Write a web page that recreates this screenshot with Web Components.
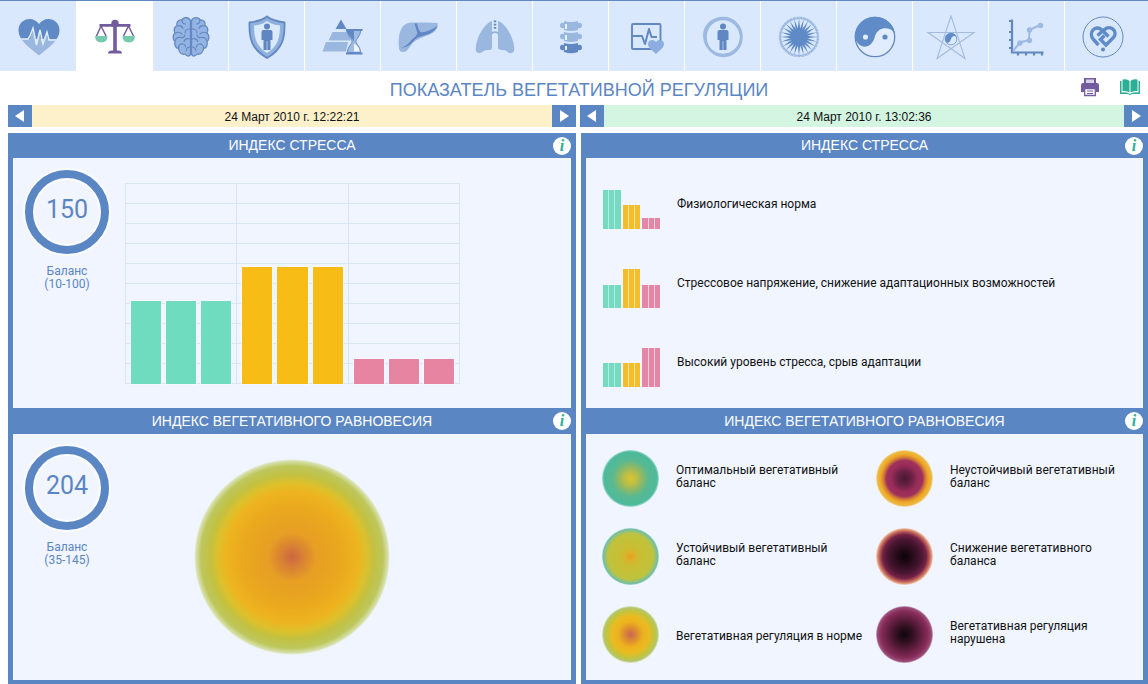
<!DOCTYPE html>
<html lang="ru">
<head>
<meta charset="utf-8">
<title>Показатель вегетативной регуляции</title>
<meta name="viewport" content="width=device-width, initial-scale=1">
<style>
html, body { margin: 0; background: #fff; }
body { font-family: "Liberation Sans", Arial, sans-serif; }
</style>
</head>
<body>
<report-page></report-page>

<script>
const define = (name, html, setup) => {
  const template = document.createElement('template');
  template.innerHTML = html;
  customElements.define(name, class extends HTMLElement {
    constructor() {
      super();
      this.attachShadow({ mode: 'open' }).append(template.content.cloneNode(true));
    }
    connectedCallback() { if (setup) setup(this, this.shadowRoot); }
  });
};

/* ---------- icon drawings, all on a 50x50 grid ---------- */
const rays = Array.from({ length: 24 }, (_, i) =>
  `<path transform="rotate(${i * 15} 25 25)" d="M23.4 20 25 6.5 26.6 20z"/>`).join('');
const man = '<circle cx="25" cy="14.5" r="3"/><path d="M21.500 18h7q2 0 2 2v8h-2v10h-3.200v-9h-.6v9h-3.200V28h-2v-8q0-2 2-2z"/>';
const ICONS = {
  heart: `<defs><clipPath id="h"><path d="M25 43.500C16 36 4.500 28.500 4.500 18.500 4.500 11 10 7 15.500 7c4 0 7.500 2 9.500 5 2-3 5.500-5 9.500-5C40 7 45.500 11 45.500 18.500 45.500 28.500 34 36 25 43.500z"/></clipPath></defs>
    <g clip-path="url(#h)"><path fill="#5f8ac6" d="M0 0h50v27H0z"/><path fill="#9ab7df" d="M4 27h12l3-9 3 14 3-12 3 11 4-9 2 5h12v18H4z"/>
    <path fill="none" stroke="#e3efff" stroke-width="1.400" d="M4 27h10l2-3 3-8 3.500 17 3.500-15 3 14 4-12 2 8h12"/></g>`,
  scales: `<g fill="none" stroke="#725c9e" stroke-width="1.500"><path d="M11 14 6.500 24M11 14l5 10M38.500 14l-5 10M38.500 14 43.500 24"/></g>
    <g fill="#725c9e"><path d="M9.500 12h31v2.700h-31zM23.200 12h3.600v27h-3.600zM18 41.500q0-3 4-3h6q4 0 4 3z"/><circle cx="25" cy="11.500" r="3.700"/></g>
    <path fill="#78c9af" d="M5 24h12.500q0 6.500-6.200 6.500T5 24zM32.500 24H45q0 6.500-6.200 6.500T32.500 24z"/>`,
  brain: `<path fill="#94b4e3" stroke="#6389c2" stroke-width="1.300" d="M24.500 8.500C23 5 17.500 4.500 16 8c-4-.5-6 3-5 5.500-3 1.500-3.500 5-2 7.500-2.500 2.500-2.500 6.500 0 8.500-1 4 1 6.500 3.500 7 .5 4 3 6.500 6.500 5.500 2 3 5 2.500 5.500 0zM25.500 8.500C27 5 32.500 4.500 34 8c4-.5 6 3 5 5.500 3 1.500 3.500 5 2 7.500 2.500 2.500 2.500 6.500 0 8.500 1 4-1 6.500-3.500 7-.5 4-3 6.500-6.500 5.500-2 3-5 2.500-5.500 0z"/>
    <path fill="none" stroke="#6389c2" stroke-width="1.100" stroke-linecap="round" d="M16 8c0 3 1 4 3.500 4M11 14c3-1 5 0 6 2.500M9 21c3-1.500 5-1 7 1M24 17c-3 0-5 1-5 4M9 29c1-3 3-4 6-3.500 2 .5 3.500-.5 4-2.500M24 27c-3-1-5 0-6 2.500M12.500 36c0-3 2-4.500 4.500-4 2 0 2.500 1.500 2.500 3M24 35c-2 0-3.500 1-4 4M34 8c0 3-1 4-3.500 4M39 14c-3-1-5 0-6 2.500M41 21c-3-1.500-5-1-7 1M26 17c3 0 5 1 5 4M41 29c-1-3-3-4-6-3.500-2 .5-3.500-.5-4-2.500M26 27c3-1 5 0 6 2.500M37.500 36c0-3-2-4.500-4.500-4-2 0-2.500 1.500-2.500 3M26 35c2 0 3.500 1 4 4"/>`,
  shield: `<path fill="#90b1de" stroke="#6288c1" stroke-width="1.800" d="M25 4.500c5 4 10 5 17.500 6C43 25 41 37 25 46 9 37 7 25 7.500 10.500 15 9.500 20 8.500 25 4.500z"/>
    <path fill="#dceafd" d="M25 9c4 3 8 4 13 4.500C38 25 36 34.500 25 41 14 34.500 12 25 12 13.500 17 13 21 12 25 9z"/><g fill="#6086c1">${man}</g>`,
  pyramid: `<path fill="#6288c1" d="m23 7.500 5.500 9.500h-11z"/><path fill="#9ab7df" d="M14.500 20H29l4 8.500H10.500zM8 30h22l-2 9.500H4.500z"/>
    <path fill="#9fbce4" stroke="#6288c1" d="M29.500 18.500h13c0 6-4.500 8-4.500 11s4.500 5 4.500 11h-13c0-6 4.500-8 4.500-11s-4.500-5-4.500-11z"/><path fill="#eef5ff" d="M30.500 20H36v8h-1c-1-3-4-4-4.500-8zM36 31.500c3 2 5.500 4 5.500 8H36z"/>
    <path fill="#6288c1" d="M28 17h16.500v2H28zM28 40.500h16.500v2H28zM27.500 18.500H36v11z"/>`,
  liver: `<path fill="#9ab7df" d="M5 35C4 26 5 10.500 18 10.500c8 0 19-.5 25.500.500 1 6-2.500 9-8 11.500-9 4-14.500 5-18 10-3 4-5 8-9 7.500C6 39.500 5 38 5 35z"/>
    <path fill="#6087c4" d="M20.500 11.500h2.500q1 6 4 9 9-1 17-7-4 8-14 10-6 1-9 4-6 8-14 8.500 6-2 11-8.500 4-3 5.500-6z"/>`,
  lungs: `<path fill="#9ab7df" d="M22 9c-5 1-13 11-15.500 22-1 5-1.500 9 1.500 10 4 1 5-3 9-3 3 0 5 0 5-3zM28 9c5 1 13 11 15.500 22 1 5 1.500 9-1.500 10-4 1-5-3-9-3-3 0-5 0-5-3z"/><path fill="none" stroke="#6288c1" stroke-width="2.500" stroke-dasharray="1.800 1.400" d="M25 8.500V18"/><path fill="none" stroke="#8cacda" stroke-width="1.300" d="M21 22q4-4 8 0"/>`,
  spine: `<g fill="#9ab7df"><path d="M18 9q7 2 14 0v2q4-1 4 2.500T32 16v2q-7 2-14 0v-2q-4 1-4-2.500T18 11z"/><path d="M18 20q7 2 14 0v2q4-1 4 2.500T32 27v2q-7 2-14 0v-2q-4 1-4-2.500T18 22z"/></g><path fill="#6087c4" d="M18 31q7 2 14 0v2q4-1 4 2.500T32 38v2q-7 2.500-14 0v-2q-4 1-4-2.500T18 33z"/><path fill="#e7f1ff" d="M19 12h2v5h-2zM19 23h2v5h-2zM19 34h2v4h-2z"/>`,
  monitor: `<rect x="10" y="12" width="28.5" height="25" rx="1" fill="none" stroke="#6288c1" stroke-width="1.900"/><path fill="none" stroke="#6288c1" stroke-width="2" stroke-linejoin="round" d="M10 24h10l3 8 4-15 2.500 8H35"/>
    <path fill="#8bade0" d="M34 42c-4-4-8-6.500-8-10 0-4.500 6-5.500 8-2 2-3.500 8-2.500 8 2 0 3.500-4 6-8 10z"/>`,
  aura: `<g fill="none" stroke="#9cb9e1"><ellipse cx="25.500" cy="25" rx="18" ry="19" stroke-width="2.500"/><ellipse cx="24.500" cy="25" rx="19" ry="18" stroke-width="2" transform="rotate(40 25 25)"/><circle cx="25" cy="25" r="17.500" stroke-width="1.500"/></g><g fill="#6087c4">${man}</g>`,
  mandala: `<circle cx="25" cy="25" r="19" fill="none" stroke="#9cb9e1" stroke-width="2.400"/><circle cx="25" cy="25" r="19.500" fill="none" stroke="#c9dcf6" stroke-width="1" stroke-dasharray="1.500 2"/><g fill="#5f8ac6">${rays}<circle cx="25" cy="25" r="6"/></g>`,
  yinyang: `<circle cx="25" cy="25" r="19.700" fill="#e1edfe" stroke="#6288c1" stroke-width="1.300"/><path fill="#5f8bc9" d="M4.800 25a20.200 20.200 0 0 1 40.400 0C45 15 29 12 25 24c-3 14-17 14-20.200 1z"/><circle cx="15.500" cy="25" r="2.600" fill="#e1edfe"/><circle cx="35" cy="25" r="2.600" fill="#6288c1"/>`,
  star: `<path fill="none" stroke="#a4bcdf" stroke-width="1.100" d="M25 4 11 46.500 48 20.500H2L39 46.500z"/><circle cx="25" cy="27" r="5.800" fill="#dceafd" stroke="#6f95cc" stroke-width=".8"/><path fill="#5f8bc9" d="M19 27a6 6 0 0 1 12 0c0-4-5-4-6 0s-5 6-6 0z"/>`,
  graph: `<path fill="none" stroke="#6288c1" stroke-width="2.200" d="M10 7.500V40.500H41.500M7 9h3M7 20h3M7 28h3M7 36h3M16 40.500v3M24 40.500v3M32 40.500v3M40 40.500v3"/><path fill="none" stroke="#9fbae2" stroke-width="2" d="m11 39 7-8.500 9-2.500.5-10L38 13"/><g fill="#9fbae2"><circle cx="18" cy="31" r="2.700"/><circle cx="27.500" cy="28.500" r="2.700"/><circle cx="27.500" cy="18" r="2.700"/><circle cx="38.500" cy="13.500" r="2.700"/></g>`,
  logo: `<circle cx="25" cy="25" r="20" fill="none" stroke="#6288c1"/><g fill="none" stroke="#5f8bc9" stroke-width="3.400"><path d="m20.500 33-5-5.500c-6-7 2-15.500 8.500-9.500l6.500 6.500"/><path d="m19.500 23.500 6.500-5.500c6-6 14.500 1 9.500 7.500L28 33l-5.500-5.500 4-4"/></g><circle cx="25" cy="37.500" r="2" fill="#6288c1"/>`
};
const TABS = [
  ['heart', 'Сердце'], ['scales', 'Вегетативная регуляция'], ['brain', 'Мозг'], ['shield', 'Защита'],
  ['pyramid', 'Ресурсы'], ['liver', 'Печень'], ['lungs', 'Лёгкие'], ['spine', 'Позвоночник'],
  ['monitor', 'Монитор'], ['aura', 'Аура'], ['mandala', 'Мандала'], ['yinyang', 'Инь и ян'],
  ['star', 'Звезда'], ['graph', 'График'], ['logo', 'О программе']
];

define('nav-tab', `<style>
  :host { display: block; flex: 0 0 76px; box-sizing: border-box; border-left: 1px solid #fff; height: 70px; }
  :host([active]) { background: #fff; }
  :host(:first-child) { border-left-color: transparent; }
  button { display: grid; place-items: center; width: 100%; height: 100%; padding: 2px 0 0; border: 0; background: none; }
  svg { width: 50px; height: 50px; display: block; }
</style><button type="button"><svg viewBox="0 0 50 50"></svg></button>`, (el, root) => {
  root.querySelector('svg').innerHTML = ICONS[el.getAttribute('icon')];
  root.querySelector('button').setAttribute('aria-label', el.getAttribute('label'));
});

define('nav-bar', `<style>
  :host { display: block; background: #d9e8fd; border-top: 1px solid #6288c1; overflow: hidden; }
  nav { display: flex; }
</style><nav>${TABS.map(([i, l]) => `<nav-tab icon="${i}" label="${l}"${i === 'scales' ? ' active' : ''}></nav-tab>`).join('')}</nav>`);

define('title-bar', `<style>
  :host { display: grid; grid-template-columns: 1fr auto 1fr; align-items: center; height: 34px; padding: 0 8px 0 18px; }
  h1 { grid-column: 2; margin: 0; font-size: 18px; line-height: 22px; padding-top: 3px; font-weight: 400; color: #5b86c4; white-space: nowrap; }
  div { display: flex; justify-content: flex-end; gap: 20px; padding-bottom: 2px; }
  button { border: 0; padding: 0; background: none; width: 20px; height: 20px; }
  svg { display: block; width: 20px; height: 20px; }
</style><h1><slot></slot></h1><div>
<button type="button" aria-label="Печать"><svg viewBox="0 0 20 20"><path fill="#725c9e" d="M4 1h12v5H4zM3 6h14q2 0 2 2v7h-3v-4H4v4H1V8q0-2 2-2z"/><path fill="#d8d3e8" d="M6 2.500h8V6H6z"/><path fill="#fff" stroke="#725c9e" stroke-width="1.300" d="M4.700 11.500h10.600v7H4.700z"/><path stroke="#725c9e" d="M7 14h6M7 16.500h6"/></svg></button>
<button type="button" aria-label="Справка"><svg viewBox="0 0 20 20"><path fill="#2cae97" d="M0 4h1.500v11.500q5.500-1 8.500 1.500 3-2.500 8.500-1.500V4H20v13h-8q-1 1-2 1t-2-1H0z"/><path fill="#2cae97" d="M2.500 2.500q5-1 7 1.500v11.500q-2.500-2-7-1.500zM17.500 2.500q-5-1-7 1.500v11.500q2.500-2 7-1.500z"/></svg></button></div>`);

define('date-bar', `<style>
  :host { display: flex; align-items: stretch; height: 22px; background: var(--bar); color: #111; }
  button { flex: 0 0 24px; border: 0; padding: 0; background: #5b86c4; display: grid; place-items: center; }
  svg { display: block; width: 10px; height: 12px; fill: #fff; }
  time { flex: 1; text-align: center; font-size: 12px; line-height: 24px; }
</style><button type="button" aria-label="Предыдущее"><svg viewBox="0 0 10 12"><path d="M9 0v12L0 6z"/></svg></button><time><slot></slot></time><button type="button" aria-label="Следующее"><svg viewBox="0 0 10 12"><path d="M1 0v12l9-6z"/></svg></button>`);

define('info-panel', `<style>
  :host { display: block; background: #5b86c4; padding: 0 5px; }
  header { display: grid; grid-template-columns: 18px 1fr 18px; align-items: center; height: var(--head, 25px); color: #fff; }
  h2 { grid-column: 2; margin: 0; font-size: 14px; line-height: 25px; font-weight: 400; text-align: center; }
  button { width: 18px; height: 18px; border: 0; border-radius: 50%; padding: 0; background: #fff; color: #2cae97; font: italic bold 16px/18px "Liberation Serif", serif; }
  section { background: #f0f5ff; min-height: var(--body, 250px); box-sizing: border-box; }
</style><header><h2></h2><button type="button">i</button></header><section><slot></slot></section>`, (el, root) => {
  root.querySelector('h2').textContent = el.getAttribute('heading');
});

define('value-ring', `<style>
  :host { display: block; flex: 0 0 84px; text-align: center; color: #5b86c4; font-family: Roboto, sans-serif; }
  .ring { box-sizing: border-box; width: 84px; height: 84px; border: 8px solid #5b86c4; border-radius: 50%; box-shadow: 0 0 0 2px #fafcff, inset 0 0 0 2px #fafcff; font-size: 25px; line-height: 64px; }
  p { margin: 11px 0 0; font-size: 12px; line-height: 13px; }
</style><div class="ring"></div><p>Баланс<br><slot></slot></p>`, (el, root) => {
  root.querySelector('.ring').textContent = el.getAttribute('value');
});

define('bar-chart', `<style>
  :host { display: grid; grid-template-columns: repeat(3, 1fr); width: 335px; height: 201px; box-sizing: border-box; border-right: 1px solid #d8e5f8;
    background: repeating-linear-gradient(#d8e5f8 0 1px, transparent 1px 20px); }
  div { display: flex; align-items: flex-end; gap: 5px; padding: 0 5px; border-left: 1px solid #d8e5f8; }
  i { flex: 1; box-shadow: 0 0 0 1px #f6f9ff; }
  .low i { height: 83px; background: #6fdcc0; }
  .mid i { height: 117px; background: #f7bc16; }
  .high i { height: 25px; background: #e784a2; }
</style><div class="low"><i></i><i></i><i></i></div><div class="mid"><i></i><i></i><i></i></div><div class="high"><i></i><i></i><i></i></div>`);

define('bar-legend', `<style>
  :host { display: flex; align-items: flex-end; height: 39px; }
  .pic { display: flex; align-items: flex-end; gap: 2px; width: 57px; height: 39px; }
  .pic div { flex: 1; display: flex; gap: 1px; }
  i { flex: 1; }
  .a { background: #b5ebe2; } .b { background: #fae3a3; } .c { background: #f3cddb; }
  .a i { background: #76dac3; } .b i { background: #f3bd2b; } .c i { background: #e288a6; }
  span { padding: 0 0 12px 17px; font: 12px/26px var(--legend-font); }
</style><div class="pic"><div class="a"><i></i><i></i><i></i></div><div class="b"><i></i><i></i><i></i></div><div class="c"><i></i><i></i><i></i></div></div><span><slot></slot></span>`, (el, root) => {
  const heights = el.getAttribute('levels').split(' ');
  root.querySelectorAll('.pic div').forEach((d, n) => { d.style.height = heights[n] + 'px'; });
});

define('heat-disc', `<style>
  :host { display: block; width: 57px; height: 57px; border-radius: 50%; flex: none; }
  :host([kind="main"]) { width: 196px; height: 196px; background: radial-gradient(closest-side, #cc6743, #d98234 12%, #e79f24 25%, #e9a81e 50%, #eeb41f 67%, #ddc02b 76%, #c2c142 84%, #bdc75d 93%, #d7e0aa 98%, #f0f5ff); }
  :host([kind="optimal"]) { background: radial-gradient(closest-side, #dcc52d, #b5bd4b 25%, #8cb967 42%, #58b991 64%, #4dba9b 93%, #a9dcd7); }
  :host([kind="steady"]) { background: radial-gradient(closest-side, #ed9e1b, #d8b42d 17%, #c9bd32 35%, #bec33d 80%, #8fc181 90%, #70bfa5 96%, #b9ded9); }
  :host([kind="norm"]) { background: radial-gradient(closest-side, #c96753, #dc8b34 22%, #edb21e 45%, #e9bb20 65%, #c5c33b 82%, #b3c669 94%, #dfe9c7); }
  :host([kind="unsteady"]) { background: radial-gradient(closest-side, #4c1830, #672143 25%, #9b2c59 48%, #9d315c 63%, #d98134 75%, #edaa24 84%, #edb947 95%, #f5e4bc); }
  :host([kind="reduced"]) { background: radial-gradient(closest-side, #0b040a, #260b19 28%, #4b1733 60%, #742245 77%, #c2645a 89%, #e09a78 95%, #f0d5cd); }
  :host([kind="broken"]) { background: radial-gradient(closest-side, #100610, #30101f 28%, #641f42 60%, #862c58 82%, #9b4b77 95%, #ceb1cf); }
</style>`);

define('disc-legend', `<style>
  :host { display: flex; align-items: center; gap: 17px; height: 57px; }
  span { font: 12px/13px var(--legend-font); padding-bottom: 3px; }
  :host([single]) span { padding: 4px 0 0; white-space: nowrap; }
</style><heat-disc></heat-disc><span><slot></slot></span>`, (el, root) => {
  root.querySelector('heat-disc').setAttribute('kind', el.getAttribute('kind'));
});

define('report-page', `<style>
  :host { display: block; --legend-font: Roboto, sans-serif; color: #111; }
  main { display: grid; grid-template-columns: 1fr 1fr; column-gap: 4px; padding-left: 8px; }
  date-bar { margin-bottom: 6px; }
  .yellow { --bar: #fdf1cc; } .green { --bar: #d3f5e2; }
  .right info-panel { margin-left: 1px; }
  .second { --head: 26px; --body: 246px; padding-bottom: 5px; }
  .gauge { display: flex; align-items: flex-start; padding: 12px; }
  bar-chart { margin: 13px 0 0 16px; }
  .disc { flex: 1; display: flex; justify-content: center; padding: 13px 84px 0 0; }
  .bars { display: grid; row-gap: 40px; padding: 32px 17px 0; }
  .discs { display: grid; grid-template-columns: 274px 1fr; row-gap: 21px; padding: 16px 20px 0 16px; }
</style>
<nav-bar></nav-bar>
<title-bar>ПОКАЗАТЕЛЬ ВЕГЕТАТИВНОЙ РЕГУЛЯЦИИ</title-bar>
<main>
  <article>
    <date-bar class="yellow">24 Март 2010 г. 12:22:21</date-bar>
    <info-panel heading="ИНДЕКС СТРЕССА"><div class="gauge"><value-ring value="150">(10-100)</value-ring><bar-chart></bar-chart></div></info-panel>
    <info-panel class="second" heading="ИНДЕКС ВЕГЕТАТИВНОГО РАВНОВЕСИЯ"><div class="gauge"><value-ring value="204">(35-145)</value-ring><div class="disc"><heat-disc kind="main"></heat-disc></div></div></info-panel>
  </article>
  <article class="right">
    <date-bar class="green">24 Март 2010 г. 13:02:36</date-bar>
    <info-panel heading="ИНДЕКС СТРЕССА"><div class="bars">
      <bar-legend levels="39 24 11">Физиологическая норма</bar-legend>
      <bar-legend levels="23 39 23">Стрессовое напряжение, снижение адаптационных возможностей</bar-legend>
      <bar-legend levels="24 24 39">Высокий уровень стресса, срыв адаптации</bar-legend>
    </div></info-panel>
    <info-panel class="second" heading="ИНДЕКС ВЕГЕТАТИВНОГО РАВНОВЕСИЯ"><div class="discs">
      <disc-legend kind="optimal">Оптимальный вегетативный<br>баланс</disc-legend>
      <disc-legend kind="unsteady">Неустойчивый вегетативный<br>баланс</disc-legend>
      <disc-legend kind="steady">Устойчивый вегетативный<br>баланс</disc-legend>
      <disc-legend kind="reduced">Снижение вегетативного<br>баланса</disc-legend>
      <disc-legend kind="norm" single>Вегетативная регуляция в норме</disc-legend>
      <disc-legend kind="broken">Вегетативная регуляция<br>нарушена</disc-legend>
    </div></info-panel>
  </article>
</main>`);
</script>
</body>
</html>
